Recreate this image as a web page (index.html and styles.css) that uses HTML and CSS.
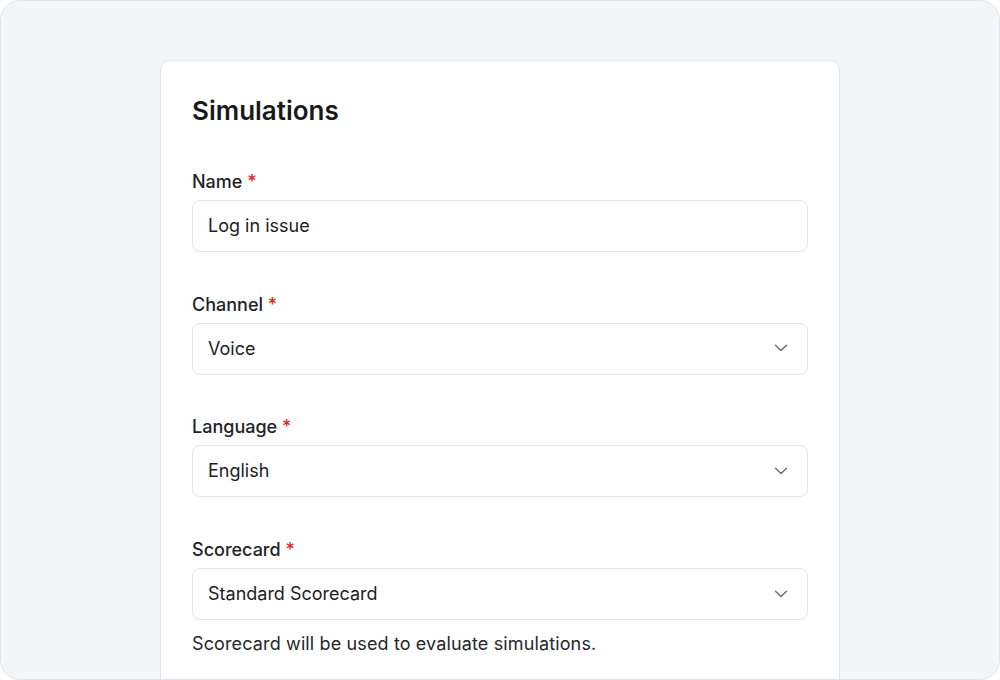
FILE: index.html
```html
<!DOCTYPE html>
<html>
<head>
<meta charset="utf-8">
<link rel="stylesheet" href="styles.css">
</head>
<body>
<div class="frame">
  <div class="card">
    <h1 class="title">Simulations</h1>
    <div class="field">
      <label class="label">Name <span class="req">*</span></label>
      <div class="input">Log in issue</div>
    </div>
    <div class="field">
      <label class="label">Channel <span class="req">*</span></label>
      <div class="input select">Voice
        <svg class="chev" width="14" height="8" viewBox="0 0 14 8"><path d="M1.5 1.2l5.5 5.3 5.5-5.3" fill="none" stroke="#6b6f7a" stroke-width="1.5" stroke-linecap="round" stroke-linejoin="round"/></svg>
      </div>
    </div>
    <div class="field">
      <label class="label">Language <span class="req">*</span></label>
      <div class="input select">English
        <svg class="chev" width="14" height="8" viewBox="0 0 14 8"><path d="M1.5 1.2l5.5 5.3 5.5-5.3" fill="none" stroke="#6b6f7a" stroke-width="1.5" stroke-linecap="round" stroke-linejoin="round"/></svg>
      </div>
    </div>
    <div class="field">
      <label class="label">Scorecard <span class="req">*</span></label>
      <div class="input select">Standard Scorecard
        <svg class="chev" width="14" height="8" viewBox="0 0 14 8"><path d="M1.5 1.2l5.5 5.3 5.5-5.3" fill="none" stroke="#6b6f7a" stroke-width="1.5" stroke-linecap="round" stroke-linejoin="round"/></svg>
      </div>
      <p class="help">Scorecard will be used to evaluate simulations.</p>
    </div>
  </div>
</div>
</body>
</html>
```

FILE: styles.css
```css
* { box-sizing: border-box; }
html, body { margin: 0; padding: 0; }
body {
  width: 1000px;
  height: 680px;
  font-family: Inter, "Noto Sans", sans-serif;
  color: #1c1d21;
  background: #ffffff;
}
.frame {
  width: 1000px;
  height: 680px;
  border: 1px solid #e1e3e8;
  border-radius: 20px;
  background: #f3f6f9;
  overflow: hidden;
  padding-top: 59px;
}
.card {
  width: 680px;
  margin: 0 auto;
  background: #ffffff;
  border: 1px solid #e3e5e9;
  border-radius: 10px;
  padding: 34px 31px 40px;
  min-height: 700px;
}
.title {
  margin: 0;
  font-size: 26px;
  line-height: 32px;
  font-weight: 600;
  color: #18191c;
}
.field {
  display: flex;
  flex-direction: column;
  margin-top: 40.7px;
}
.field:first-of-type { margin-top: 43px; }
.label {
  font-size: 18px;
  line-height: 24px;
  font-weight: 500;
  color: #222328;
  margin-bottom: 6px;
}
.req { color: #dc2626; }
.input {
  height: 52px;
  border: 1px solid #e2e4e8;
  border-radius: 8px;
  padding: 0 15px 1px;
  display: flex;
  align-items: center;
  justify-content: space-between;
  font-size: 18px;
  color: #1c1d21;
}
.chev { margin-right: 4px; }
.help {
  margin: 12px 0 0;
  font-size: 18px;
  line-height: 24px;
  color: #26272b;
  letter-spacing: 0.13px;
}
```
